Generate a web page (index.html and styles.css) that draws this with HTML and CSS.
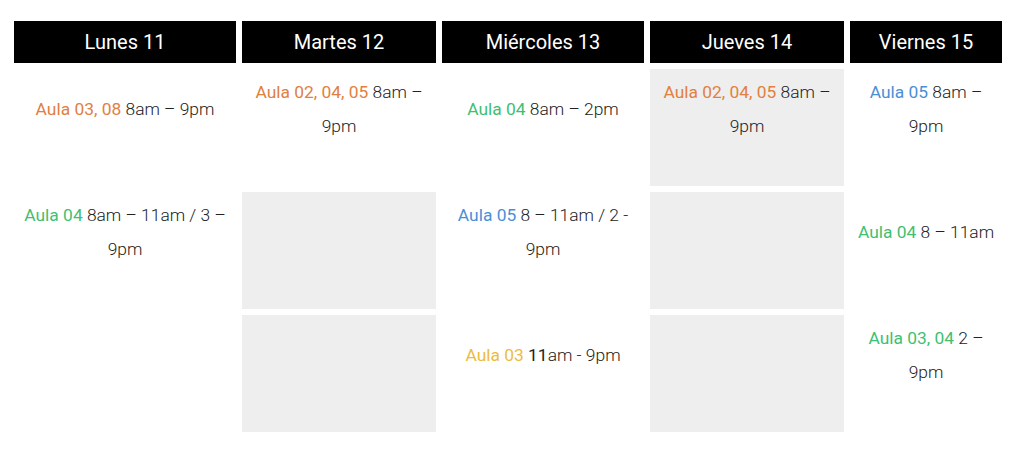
FILE: index.html
```html
<!DOCTYPE html>
<html lang="es">
<head>
<meta charset="utf-8">
<link rel="stylesheet" href="styles.css">
</head>
<body>
<div class="schedule">
  <div class="head">Lunes 11</div>
  <div class="head">Martes 12</div>
  <div class="head">Miércoles 13</div>
  <div class="head">Jueves 14</div>
  <div class="head">Viernes 15</div>

  <div class="cell"><p><span class="aula orange">Aula 03, 08</span> 8am – 9pm</p></div>
  <div class="cell"><p><span class="aula orange">Aula 02, 04, 05</span> 8am – 9pm</p></div>
  <div class="cell"><p><span class="aula green">Aula 04</span> 8am – 2pm</p></div>
  <div class="cell gray"><p><span class="aula orange">Aula 02, 04, 05</span> 8am – 9pm</p></div>
  <div class="cell"><p><span class="aula blue">Aula 05</span> 8am – 9pm</p></div>

  <div class="cell"><p><span class="aula green">Aula 04</span> 8am – 11am / 3 – 9pm</p></div>
  <div class="cell gray"></div>
  <div class="cell"><p><span class="aula blue">Aula 05</span> 8 – 11am / 2 - 9pm</p></div>
  <div class="cell gray"></div>
  <div class="cell"><p><span class="aula green">Aula 04</span> 8 – 11am</p></div>

  <div class="cell"></div>
  <div class="cell gray"></div>
  <div class="cell"><p><span class="aula yellow">Aula 03</span> <span class="dark">11</span>am - 9pm</p></div>
  <div class="cell gray"></div>
  <div class="cell"><p><span class="aula green">Aula 03, 04</span> 2 – 9pm</p></div>
</div>
</body>
</html>
```
FILE: styles.css
```css
html, body {
  margin: 0;
  padding: 0;
  background: #ffffff;
}
body {
  font-family: Roboto, "Liberation Sans", sans-serif;
}
.schedule {
  display: grid;
  grid-template-columns: 222px 194px 202px 194px 152px;
  grid-template-rows: 42px 117px 117px 117px;
  gap: 6px;
  padding: 21px 0 0 14px;
}
.head {
  background: #000000;
  color: #ffffff;
  font-size: 20px;
  font-weight: 400;
  display: flex;
  align-items: center;
  justify-content: center;
}
.cell {
  display: flex;
  flex-direction: column;
  justify-content: center;
  padding: 0 6px;
  text-align: center;
  font-size: 17.4px;
  font-weight: 300;
  color: #222222;
}
.cell p {
  margin: 0 0 37px;
  line-height: 34px;
}
.gray {
  background: #eeeeee;
}
.aula {
  font-weight: 400;
}
.dark {
  font-weight: 400;
}
.orange { color: #e2803f; }
.green { color: #3fbf72; }
.blue { color: #4a8fd6; }
.yellow { color: #ecbd3c; }
```
